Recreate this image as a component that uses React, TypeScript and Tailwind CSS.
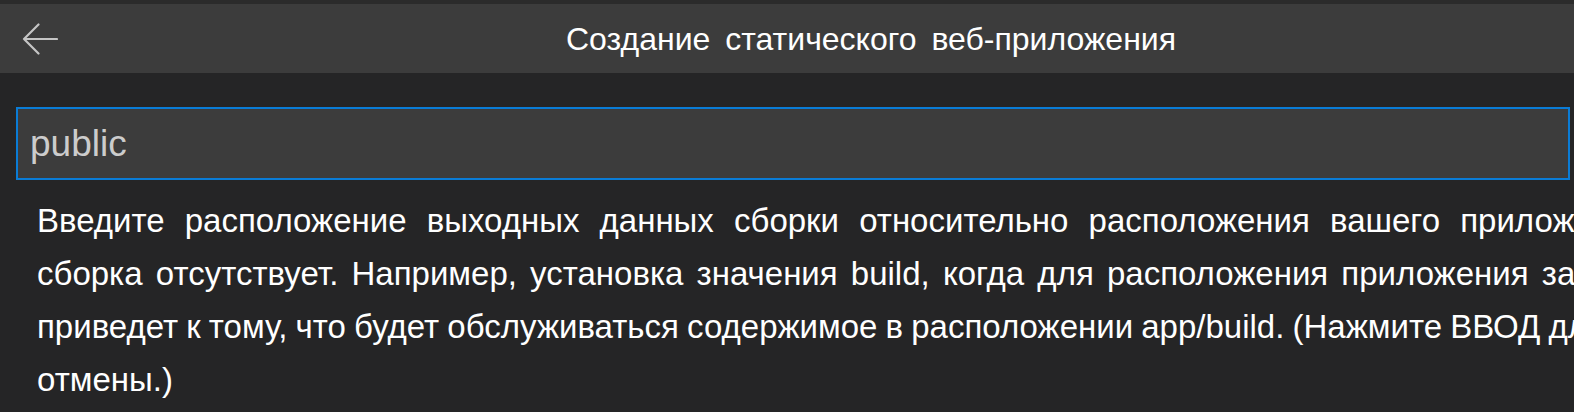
const descLines = [
  {
    text: "Введите расположение выходных данных сборки относительно расположения вашего приложения. Оставьте поле пустым, если",
    spacing: "[word-spacing:11px]",
  },
  {
    text: "сборка отсутствует. Например, установка значения build, когда для расположения приложения задано значение app,",
    spacing: "[word-spacing:4px]",
  },
  {
    text: "приведет к тому, что будет обслуживаться содержимое в расположении app/build. (Нажмите ВВОД для подтверждения или ESC для",
    spacing: "[word-spacing:-1px]",
  },
  { text: "отмены.)", spacing: "[word-spacing:0px]" },
];

function BackArrow() {
  return (
    <svg width="36" height="32" viewBox="0 0 36 32" fill="none">
      <path
        d="M35 16H2M16.5 1.5L2 16l14.5 14.5"
        stroke="#c5c5c5"
        strokeWidth="2.2"
        strokeLinecap="round"
        strokeLinejoin="round"
      />
    </svg>
  );
}

export default function App() {
  return (
    <div
      className="h-[412px] w-full overflow-hidden bg-[#252526]"
      style={{ fontFamily: '"Liberation Sans", Arial, sans-serif' }}
    >
      <div className="h-[4px] bg-[#2b2b2b]" />
      <div className="flex h-[69px] items-center bg-[#3c3c3c]">
        <div className="flex w-[58px] justify-end">
          <BackArrow />
        </div>
        <div className="ml-[508px] whitespace-nowrap text-[32px] text-white [word-spacing:6px]">
          Создание статического веб-приложения
        </div>
      </div>
      <div className="ml-[16px] mr-[4px] mt-[34px] flex h-[73px] items-center border-2 border-[#0a7cd6] bg-[#3c3c3c] pl-[12px]">
        <span className="text-[37px] text-[#cccccc]">public</span>
      </div>
      <div className="mt-[14px] pl-[37px] text-[33px] leading-[53px] text-white">
        {descLines.map((line) => (
          <div className={`whitespace-nowrap ${line.spacing}`} key={line.text}>
            {line.text}
          </div>
        ))}
      </div>
    </div>
  );
}
